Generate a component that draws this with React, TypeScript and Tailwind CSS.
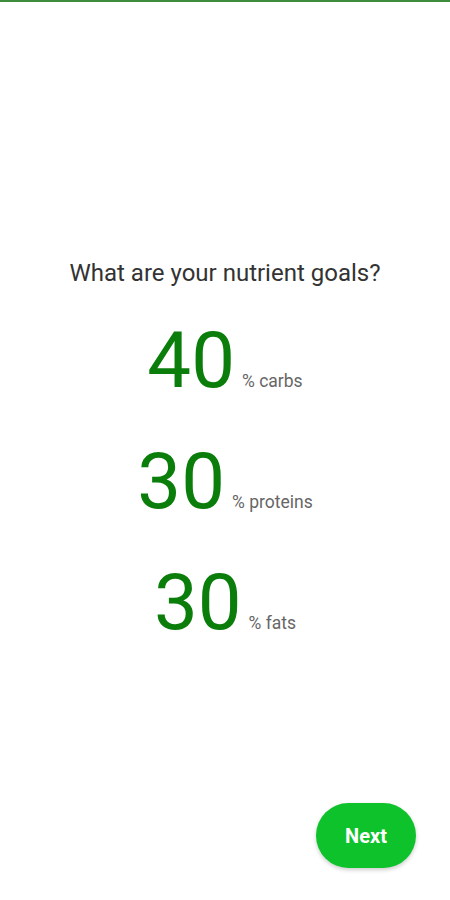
export default function App() {
  const goals = [
    { value: "40", label: "% carbs" },
    { value: "30", label: "% proteins" },
    { value: "30", label: "% fats" },
  ];

  return (
    <div className="relative flex h-[900px] w-full flex-col bg-white font-['Roboto',sans-serif]">
      <div className="h-[2px] w-full bg-[#3d8b3d]" />

      <div className="mt-[256px] flex flex-col items-center">
        <p className="text-[24px] leading-[30px] text-[#333333]">
          What are your nutrient goals?
        </p>

        <div className="mt-[33px] flex flex-col items-center gap-[41px]">
          {goals.map((g, i) => (
            <div key={i} className="flex items-baseline gap-[7px]">
              <span className="text-[78px] leading-[80px] text-[#0b7d0b]">
                {g.value}
              </span>
              <span className="text-[17.5px] text-[#666666]">{g.label}</span>
            </div>
          ))}
        </div>
      </div>

      <button className="absolute bottom-[32px] right-[34px] flex h-[65px] w-[100px] items-center justify-center rounded-full bg-[#0dc22b] text-[20px] font-bold text-white shadow-[0_2px_4px_rgba(0,0,0,0.2)]">
        Next
      </button>
    </div>
  );
}
